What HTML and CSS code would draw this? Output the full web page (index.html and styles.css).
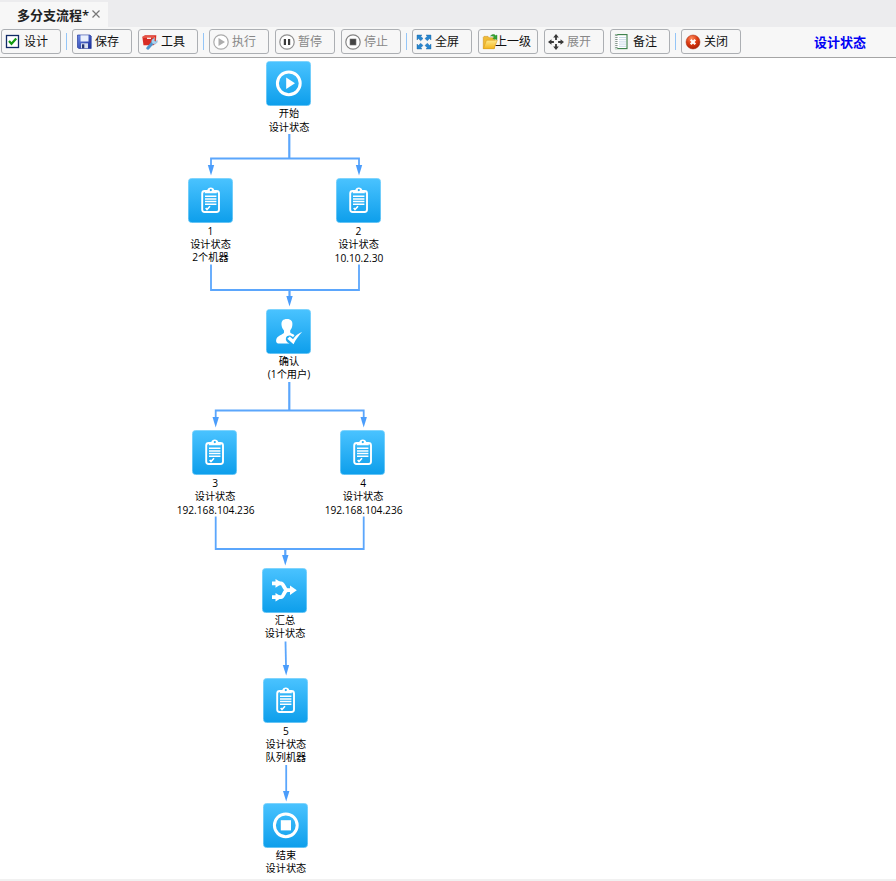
FILE: index.html
```html
<!DOCTYPE html>
<html lang="zh-CN">
<head>
<meta charset="utf-8">
<title>多分支流程</title>
<link rel="stylesheet" href="styles.css">
</head>
<body>
<svg class="defs" width="0" height="0">
  <defs>
    <linearGradient id="tile" x1="0" y1="0" x2="0" y2="1"><stop offset="0" stop-color="#4ac3ff"/><stop offset="1" stop-color="#0d9eeb"/></linearGradient>
    <linearGradient id="folder" x1="0" y1="0" x2="0" y2="1"><stop offset="0" stop-color="#ffe98a"/><stop offset="1" stop-color="#f3b51d"/></linearGradient>
    <radialGradient id="red" cx=".4" cy=".25" r=".8"><stop offset="0" stop-color="#ff8a5c"/><stop offset=".5" stop-color="#dc3c12"/><stop offset="1" stop-color="#a81c04"/></radialGradient>
    <linearGradient id="disk" x1="0" y1="0" x2="1" y2="1"><stop offset="0" stop-color="#6d8be8"/><stop offset="1" stop-color="#182c96"/></linearGradient>
    <marker id="tip" markerUnits="userSpaceOnUse" markerWidth="11" markerHeight="8" refX="1" refY="3.5" orient="auto"><path d="M0 0.3L10.5 3.5L0 6.7z" fill="#4b9dfb"/></marker>
    <symbol id="bg" viewBox="0 0 45 45"><rect x=".2" y=".2" width="44.6" height="44.6" rx="4" fill="url(#tile)" stroke="#8fd9fc" stroke-width=".6"/></symbol>
    <symbol id="start" viewBox="0 0 45 45"><use href="#bg"/><circle cx="22.8" cy="22.3" r="11.4" fill="none" stroke="#fff" stroke-width="3"/><path d="M20.2 16.5L29 22.3L20.2 28.1z" fill="#fff"/></symbol>
    <symbol id="end" viewBox="0 0 45 45"><use href="#bg"/><circle cx="22.8" cy="22.3" r="11.4" fill="none" stroke="#fff" stroke-width="3"/><rect x="17.8" y="17.2" width="10.2" height="10.2" fill="#fff"/></symbol>
    <symbol id="task" viewBox="0 0 45 45"><use href="#bg"/><rect x="14.2" y="13" width="16.8" height="21" rx="2.5" fill="none" stroke="#fff" stroke-width="1.9"/><path d="M16.8 15.3V12.7H19.2C19.6 8.3 26 8.3 26.4 12.7H28.8V15.3z" fill="#fff"/><circle cx="22.8" cy="12.1" r="1.1" fill="#22aef5"/><path d="M17 18.2H28.4M17 20.9H28.4M17 23.6H28.4M17 26.3H28.4" stroke="#fff" stroke-width="1.5"/><path d="M17.7 30L19 31.5L22 28.3" fill="none" stroke="#fff" stroke-width="1.6"/></symbol>
    <symbol id="confirm" viewBox="0 0 45 45"><use href="#bg"/><path d="M21 10C25 10 27 12.2 26.3 16.5C26 19.2 25 20 24.2 21.5V23.6C25 24.6 27 25 28.5 26.2L27 28.2C24.5 25.5 21 26 20 28.8C19.3 31 20.6 33.6 23.5 34.5H13C10.5 34.5 9.4 32.5 10.6 29.5C11.8 26.8 16.5 25.7 18 23.8V21.5C17 20 16 19 15.6 16.5C15 12 17 10 21 10z" fill="#fff"/><path d="M21.3 29.8L23.8 27.4L27 30.2C29.3 27 32.3 24.4 36.2 22.8C33 26.2 30 30.3 27.5 35.2z" fill="#fff"/></symbol>
    <symbol id="merge" viewBox="0 0 45 45"><use href="#bg"/><g fill="none" stroke="#fff"><path d="M10 15.3H14M17 15.3H19C21.8 15.3 22 22 25.5 22.2M10 29.2H14M17 29.2H19C21.8 29.2 22 22.3 25.5 22.2H29" stroke-width="3.8"/></g><path d="M13.5 11L20.5 15.3L13.5 19.7zM13.5 24.9L20.5 29.2L13.5 33.6zM28 17.4L34.8 22.2L28 27z" fill="#fff"/></symbol>
  </defs>
</svg>
<div class="app">
  <header class="tabs"><div class="tab"><span class="tab-title">多分支流程*</span><svg class="tab-close" viewBox="0 0 8 8"><path d="M.5 .5L7.5 7.5M7.5 .5L.5 7.5"/></svg></div></header>
  <nav class="toolbar">
    <div class="btn design"><svg class="ico" viewBox="0 0 16 16"><rect x="2.5" y="1.5" width="12" height="12" fill="#fff" stroke="#102a66" stroke-width="1.3"/><path d="M5 7L7.5 9.8L12.2 4.6" fill="none" stroke="#129b12" stroke-width="2.2"/></svg><span>设计</span></div>
    <i class="sep"></i>
    <div class="btn"><svg class="ico" viewBox="0 0 16 16"><path d="M1.5 1H14L15.2 2.2V14.5H2.7L1.5 13.3z" fill="url(#disk)" stroke="#283c9c" stroke-width=".7"/><rect x="4.5" y="1.3" width="8" height="6.2" fill="#eaf0fc"/><rect x="5" y="9.3" width="7" height="5" fill="#d9e0ee"/><rect x="6" y="10.3" width="2.3" height="4" fill="#263572"/></svg><span>保存</span></div>
    <div class="btn"><svg class="ico" viewBox="0 0 16 16"><path d="M.3 2.7L3 1.3H14.3L13.8 9L11.5 11.2H1.5z" fill="#d82d25"/><path d="M1 3H12.5L13 9" fill="none" stroke="#f47c66"/><path d="M5 4.3H9" stroke="#fff" stroke-width="1.2"/><path d="M5.8 14.2L11.3 8" stroke="#4e95ce" stroke-width="3" stroke-linecap="round"/><path d="M10 8.8C8.6 5.9 11 3.9 13 4.5L11.9 6.2L13.2 7.5L15.3 6.5C15.8 9 13 11 10.7 9.7z" fill="#aad3f0" stroke="#6aa4cf" stroke-width=".4"/></svg><span>工具</span></div>
    <i class="sep"></i>
    <div class="btn off"><svg class="ico" viewBox="0 0 16 16"><circle cx="8" cy="8" r="7.2" fill="#fff" stroke="#aaa" stroke-width="1.2"/><path d="M5.5 4L12 8L5.5 12z" fill="#adadad"/></svg><span>执行</span></div>
    <div class="btn off"><svg class="ico" viewBox="0 0 16 16"><circle cx="8" cy="8" r="7.2" fill="#fff" stroke="#909090" stroke-width="1.2"/><path d="M5.9 5V11M10.1 5V11" stroke="#3c3c3c" stroke-width="2.2"/></svg><span>暂停</span></div>
    <div class="btn off"><svg class="ico" viewBox="0 0 16 16"><circle cx="8" cy="8" r="7.2" fill="#fff" stroke="#858585" stroke-width="1.2"/><rect x="5" y="5" width="6" height="6" fill="#444" stroke="#777" stroke-width=".6"/></svg><span>停止</span></div>
    <i class="sep"></i>
    <div class="btn"><svg class="ico" viewBox="0 0 16 16"><path d="M1 1H6L4.7 2.3L7 4.5L4.7 6.8L2.4 4.6L1 6zM10 1H15V6L13.6 4.6L11.3 6.8L9 4.5L11.3 2.3zM1 15V10L2.4 11.4L4.7 9.2L7 11.5L4.7 13.7L6 15zM15 15H10L11.3 13.7L9 11.5L11.3 9.2L13.6 11.4L15 10z" fill="#2685cf" stroke="#17609c" stroke-width=".4"/></svg><span>全屏</span></div>
    <div class="btn up"><svg class="ico" viewBox="0 0 16 16"><path d="M1.3 14.5V3.2L2 2.4H6L7.2 3.8H12.5V14.5z" fill="#f0bb35" stroke="#cf921c" stroke-width=".6"/><path d="M1.3 14.7L4.5 6.2H15.3L12 14.7z" fill="url(#folder)" stroke="#dca01c" stroke-width=".6"/><path d="M8.3 2.2C10.3-.1 12.6 0 13.6 1.8L15 1V5.6L10.8 4.5L12.1 3.3C11.3 2 9.8 2 8.3 2.2z" fill="#35a433" stroke="#187c22" stroke-width=".4"/></svg><span>上一级</span></div>
    <div class="btn off"><svg class="ico" viewBox="0 0 16 16"><path d="M8 0L10.8 3.5H8.9V5.9H7.1V3.5H5.2zM8 16L5.2 12.5H7.1V10.1H8.9V12.5H10.8zM0 8L3.5 5.2V7.1H5.9V8.9H3.5V10.8zM16 8L12.5 10.8V8.9H10.1V7.1H12.5V5.2z" fill="#383838"/></svg><span>展开</span></div>
    <div class="btn"><svg class="ico" viewBox="0 0 16 16"><rect x="1.5" y=".6" width="11.5" height="14" fill="#fff" stroke="#397e48" stroke-width="1.1"/><path d="M5 3.5H12M5 5.7H12M5 7.9H12M5 10.1H12M5 12.3H12" stroke="#c3d4e6" stroke-width=".9"/><path d="M2 .5V14.8" stroke="#f7f7f7" stroke-width="2.6"/><path d="M2.4 1V14.6" stroke="#8a9b92" stroke-width="2.4" stroke-dasharray="1 1"/></svg><span>备注</span></div>
    <i class="sep"></i>
    <div class="btn"><svg class="ico" viewBox="0 0 16 16"><circle cx="8" cy="8" r="7" fill="url(#red)" stroke="#a63014" stroke-width=".5"/><path d="M5.7 5.7L10.3 10.3M10.3 5.7L5.7 10.3" stroke="#fff" stroke-width="2.2"/></svg><span>关闭</span></div>
    <strong class="status">设计状态</strong>
  </nav>
  <main class="canvas">
    <svg class="wires" viewBox="0 58 896 823">
      <g class="wire">
        <path class="stem" d="M289.3 134V159"/>
        <path marker-end="url(#tip)" d="M289 158.5H211V166"/><path marker-end="url(#tip)" d="M289 158.5H359V166"/>
        <path d="M211 264.5V290H359V264.5"/><path marker-end="url(#tip)" class="stem" d="M289.5 290V297"/>
        <path class="stem" d="M289.3 382V411"/>
        <path marker-end="url(#tip)" d="M289 410.5H215.7V418"/><path marker-end="url(#tip)" d="M289 410.5H363.7V418"/>
        <path d="M215.7 516.5V549H363.7V516.5"/><path marker-end="url(#tip)" class="stem" d="M285.3 549V556"/>
        <path marker-end="url(#tip)" d="M285.5 641.5L286 666"/>
        <path marker-end="url(#tip)" d="M286.2 765V792"/>
      </g>
    </svg>
    <section class="node n-start"><svg><use href="#start"/></svg><p>开始</p><p class="gap">设计状态</p></section>
    <section class="node n-1"><svg><use href="#task"/></svg><p class="num">1</p><p>设计状态</p><p>2个机器</p></section>
    <section class="node n-2"><svg><use href="#task"/></svg><p class="num">2</p><p>设计状态</p><p class="gap">10.10.2.30</p></section>
    <section class="node n-confirm"><svg><use href="#confirm"/></svg><p>确认</p><p>(1个用户)</p></section>
    <section class="node n-3"><svg><use href="#task"/></svg><p class="num">3</p><p>设计状态</p><p class="gap">192.168.104.236</p></section>
    <section class="node n-4"><svg><use href="#task"/></svg><p class="num">4</p><p>设计状态</p><p class="gap">192.168.104.236</p></section>
    <section class="node n-merge"><svg><use href="#merge"/></svg><p>汇总</p><p>设计状态</p></section>
    <section class="node n-5"><svg><use href="#task"/></svg><p class="num">5</p><p>设计状态</p><p>队列机器</p></section>
    <section class="node n-end"><svg><use href="#end"/></svg><p>结束</p><p>设计状态</p></section>
  </main>
</div>
</body>
</html>
```
FILE: styles.css
```css
* { box-sizing: border-box; }
body { margin: 0; background: #fff; font-family: "Open Sans", "Noto Sans CJK SC", sans-serif; color: #000; }
.defs { position: absolute; }
.app { display: flex; flex-direction: column; height: 881px; overflow: hidden; }
.tabs { display: flex; align-items: flex-end; height: 27px; background: #ececee; }
.tab { display: flex; align-items: center; width: 108px; height: 25px; padding-left: 17px; background: #f7f7f7; color: #222; }
.tab-title { width: 75px; font-size: 13px; font-weight: 600; line-height: 24px; white-space: nowrap; }
.tab-close { width: 8px; height: 8px; margin-bottom: 1px; fill: none; stroke: #777; stroke-width: 1.2; }
.toolbar { display: flex; height: 31px; padding: 2px 0 0 1px; background: #f7f7f7; border-bottom: 1px solid #a5a5a5; }
.btn { display: flex; align-items: center; flex: none; width: 60px; height: 25px; padding-left: 3px; gap: 3px; border: 1px solid #acafb3; border-radius: 3px; font-size: 12px; line-height: 22px; white-space: nowrap; color: #111; }
.btn + .btn { margin-left: 6px; }
.ico { width: 16px; height: 16px; flex: none; }
.design { padding-left: 2px; gap: 4px; }
.up { gap: 0; }
.up .ico { margin-right: -3px; }
.off { color: #888; }
.sep { flex: none; width: 1px; height: 17px; margin: 4px 5px 0; background: #94c5f7; }
.status { margin-left: 73px; font-size: 13px; line-height: 26px; font-weight: 700; color: #0000f5; white-space: nowrap; }
.canvas { position: relative; flex: 1; border-bottom: 2px solid #f1f1f1; }
.wires { position: absolute; left: 0; top: 0; width: 896px; height: 823px; }
.wire { fill: none; stroke: #5ba6fc; stroke-width: 1.8; }
.wire .stem { stroke-width: 2.2; }
.node { position: absolute; width: 120px; display: flex; flex-direction: column; align-items: center; }
.node svg { width: 45px; height: 45px; margin-bottom: 1px; flex: none; }
.node p { margin: 0 0 0 1px; font-size: 10.2px; line-height: 13px; height: 13px; white-space: nowrap; }
.node .num { margin: 1px 0 0 1px; }
.node .gap { margin: 1px 0 0 2px; }
.n-start .gap { margin-left: 1px; }
.n-start { left: 228.5px; top: 3px; }
.n-1 { left: 150px; top: 120px; }
.n-2 { left: 298px; top: 120px; }
.n-confirm { left: 228.5px; top: 251px; }
.n-3 { left: 154.6px; top: 372px; }
.n-4 { left: 302.6px; top: 372px; }
.n-merge { left: 224.5px; top: 510.3px; }
.n-5 { left: 225.4px; top: 620px; }
.n-end { left: 225.4px; top: 745.4px; }
```
